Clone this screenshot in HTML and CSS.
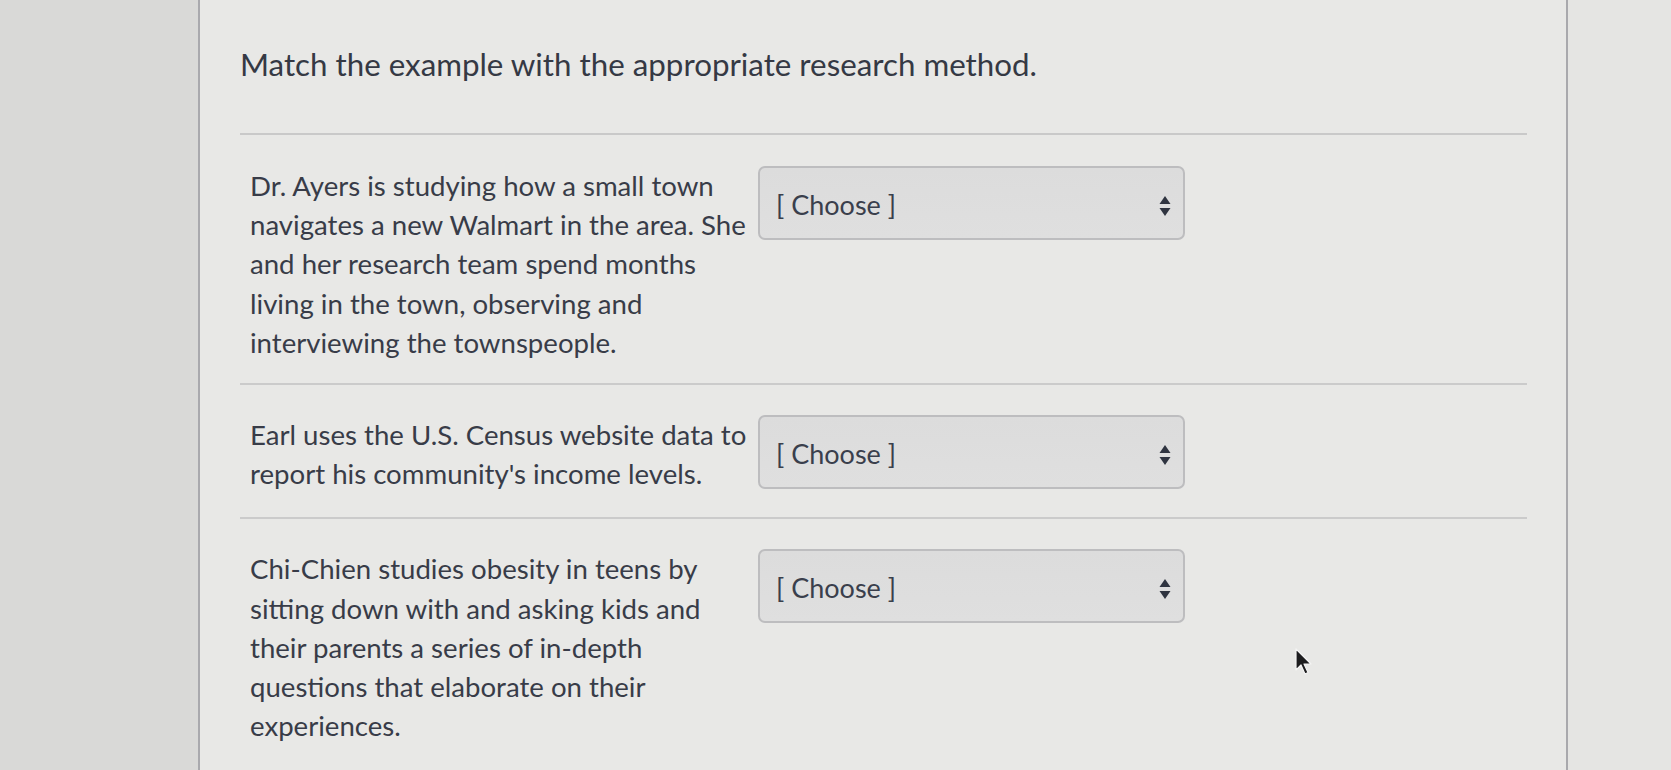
FILE: index.html
```html
<!DOCTYPE html>
<html lang="en">
<head>
<meta charset="utf-8">
<title>Matching question</title>
<link rel="stylesheet" href="styles.css">
</head>
<body>
<div class="screen">
  <div class="panel">
    <h1 class="title">Match the example with the appropriate research method.</h1>
    <div class="rows">
      <div class="row">
        <div class="prompt">Dr. Ayers is studying how a small town navigates a new Walmart in the area. She and her research team spend months living in the town, observing and interviewing the townspeople.</div>
        <div class="select"><span class="choose">[ Choose ]</span>
          <svg class="arrows" width="12" height="22" viewBox="0 0 12 22"><path d="M6 1 L11.5 9 L0.5 9 Z M0.5 13 L11.5 13 L6 21 Z" fill="#2f3440"/></svg>
        </div>
      </div>
      <div class="row">
        <div class="prompt">Earl uses the U.S. Census website data to report his community's income levels.</div>
        <div class="select"><span class="choose">[ Choose ]</span>
          <svg class="arrows" width="12" height="22" viewBox="0 0 12 22"><path d="M6 1 L11.5 9 L0.5 9 Z M0.5 13 L11.5 13 L6 21 Z" fill="#2f3440"/></svg>
        </div>
      </div>
      <div class="row">
        <div class="prompt">Chi-Chien studies obesity in teens by sitting down with and asking kids and their parents a series of in-depth questions that elaborate on their experiences.</div>
        <div class="select"><span class="choose">[ Choose ]</span>
          <svg class="arrows" width="12" height="22" viewBox="0 0 12 22"><path d="M6 1 L11.5 9 L0.5 9 Z M0.5 13 L11.5 13 L6 21 Z" fill="#2f3440"/></svg>
        </div>
      </div>
    </div>
    <svg class="cursor" width="20" height="30" viewBox="0 0 20 30"><path d="M1 1 L1 22 L6 17 L10 26 L13 24.5 L9 16 L16 16 Z" fill="#1c1c1e" stroke="#f4f4f4" stroke-width="1.2" stroke-linejoin="round"/></svg>
  </div>
  <div class="edge"></div>
</div>
</body>
</html>
```

FILE: styles.css
```css
html, body {
  margin: 0;
  padding: 0;
  height: 100%;
}
body {
  background: #d9d9d7;
  font-family: Lato, "Noto Sans", sans-serif;
  color: #383c48;
  overflow: hidden;
}
.screen {
  display: flex;
  height: 770px;
  padding-left: 198px;
}
.panel {
  position: relative;
  width: 1287px;
  background: #e8e8e6;
  border-left: 2px solid #a9a9ad;
  border-right: 2px solid #a9a9ad;
  padding: 0 39px 0 40px;
}
.edge {
  flex: 1;
  background: #e5e5e3;
}
.title {
  margin: 0;
  padding-top: 44px;
  font-size: 31.3px;
  line-height: 40px;
  font-weight: 400;
  color: #353944;
  height: 89px;
  border-bottom: 2px solid #c9c9c9;
  box-sizing: content-box;
}
.row {
  display: flex;
  align-items: flex-start;
  gap: 3px;
  padding: 30px 10px 21px 10px;
  border-bottom: 2px solid #cbcbcb;
}
.row:first-child {
  padding-top: 31px;
}
.row:nth-child(2) {
  padding-bottom: 24px;
}
.row:last-child {
  border-bottom: none;
}
.prompt {
  width: 505px;
  font-size: 27.6px;
  line-height: 39.2px;
}
.select {
  width: 427px;
  height: 74px;
  box-sizing: border-box;
  border: 2px solid #bdbdbf;
  border-radius: 7px;
  background: linear-gradient(#dcdcdc, #dfdfdf);
  display: flex;
  align-items: flex-start;
  justify-content: space-between;
  padding: 20px 12px 0 16px;
}
.choose {
  font-size: 27px;
  line-height: 34px;
  color: #3a3f4c;
}
.arrows {
  margin-top: 7px;
}
.cursor {
  position: absolute;
  left: 1095px;
  top: 648px;
}
```
